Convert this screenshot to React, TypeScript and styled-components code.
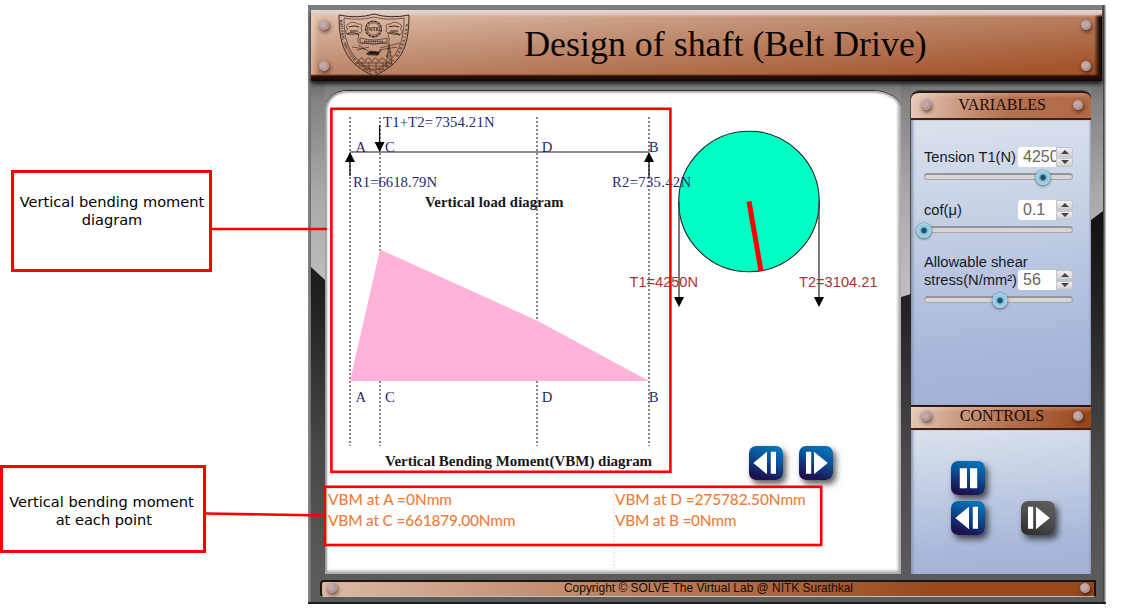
import React from "react";
import styled, { createGlobalStyle, css } from "styled-components";

const GlobalStyle = createGlobalStyle`
  *, *::before, *::after { box-sizing: border-box; }
  body { margin: 0; background: #fff; font-family: "Liberation Sans", Arial, sans-serif; }
`;

const SERIF = '"Liberation Serif", "Times New Roman", serif';

const Page = styled.div`
  position: relative;
  display: flex;
  width: 1121px;
  height: 613px;
  overflow: hidden;
  background: #fff;
`;

const Notes = styled.aside`
  display: flex;
  flex-direction: column;
  width: 308px;
  padding-top: 170px;
  gap: 193px;
`;

const Note = styled.div<{ $indent: number; $width: number; $height: number; $pad: string }>`
  width: ${(p) => p.$width}px;
  height: ${(p) => p.$height}px;
  margin-left: ${(p) => p.$indent}px;
  padding: ${(p) => p.$pad};
  border: 3px solid #f00;
  font: 14.6px/18px "DejaVu Sans", Verdana, sans-serif;
  text-align: center;
  white-space: nowrap;
  color: #000;
`;

const Frame = styled.main`
  display: flex;
  flex-direction: column;
  width: 798px;
  height: 599px;
  margin-top: 5px;
  padding: 5px 3px 0;
  background: linear-gradient(90deg, #8a8a8a 0, #6d6d6d 3px, transparent 3px, transparent 794px, #4b4445 795px, #4b4445 796px, #bcb6b6 797px),
    linear-gradient(#7d8182 0, #7d8182 75px, #5a5a5a 100%);
  border-bottom: 2px solid #1d1d1d;
`;

const Header = styled.header`
  display: flex;
  align-items: center;
  width: 791px;
  height: 71px;
  flex: none;
  padding: 0 11px 0 8px;
  background: linear-gradient(#e4d8d3 0, #dfc9bd 4px, transparent 7px, transparent 64px, #2a1005 66px, #150702 71px),
    linear-gradient(90deg, rgba(255, 235, 225, 0.4) 0, transparent 7px, transparent 783px, #2b1208 788px, #100602 791px),
    linear-gradient(175deg, #e2c3b0 0, #c18f74 38%, #a3552c 88%);
  box-shadow: 0 3px 4px rgba(0, 0, 0, 0.75);
  z-index: 1;
`;

const RivetColumn = styled.div`
  display: flex;
  flex-direction: column;
  gap: 31px;
`;

const Rivet = styled.i`
  display: block;
  flex: none;
  width: 10px;
  height: 10px;
  border-radius: 50%;
  background: radial-gradient(circle at 42% 40%, #c3a6a6 0 35%, #a98e90 60%, #dccaca 100%);
  box-shadow: 1px 2px 4px rgba(40, 15, 5, 0.75);
`;

const Crest = styled.svg`
  width: 72px;
  height: 64px;
  margin: -2px 0 0 9px;
`;

const Title = styled.h1`
  flex: 1;
  margin: -4px 37px 0 -3px;
  text-align: center;
  white-space: nowrap;
  font: 400 35.9px/44px ${SERIF};
  color: #080402;
`;

const Body = styled.div`
  display: flex;
  height: 493px;
  background: linear-gradient(#707070 0, #858585 15px, #5c5c5c 100%);
`;

const Rail = styled.div<{ $width: number; $left: number; $right: number }>`
  flex: none;
  width: ${(p) => p.$width}px;
  background: linear-gradient(#6c6c6c 0, #838383 20px, #a8a8a8 110px, #bdbdbd 200px);
  &::after {
    content: "";
    display: block;
    height: 100%;
    background: linear-gradient(#111 26%, #222 45%, #484848 75%, #5b5b5b 100%);
    clip-path: polygon(0 ${(p) => p.$left}px, 100% ${(p) => p.$right}px, 100% 100%, 0 100%);
  }
`;

const Stage = styled.section`
  display: flex;
  flex-direction: column;
  width: 576px;
  height: 483px;
  margin-top: 10px;
  border-radius: 22px 30px 0 0 / 20px 18px 0 0;
  background: #fff;
  box-shadow: 0 -1px 0 0 #303030, inset -3px -3px 3px #aaa, inset 2px 0 2px #999, inset 0 2px 2px #bbb;
`;

const StageWrap = styled.div`
  background: linear-gradient(#747474, #868686 15px, #999 60px);
  height: 483px;
`;

const Diagram = styled.svg`
  display: block;
  flex: none;
  width: 575px;
  height: 355px;
`;

const CaptionRow = styled.div`
  display: flex;
  height: 34px;
  padding-left: 60px;
`;

const Caption = styled.h2`
  width: 364px;
  margin: 0;
  white-space: nowrap;
  font: 700 14.95px/31px ${SERIF};
  color: #161616;
`;

const StageButtons = styled.div`
  display: flex;
  gap: 16px;
`;

const Results = styled.dl`
  display: grid;
  grid-template-columns: 285px 1fr;
  height: 80px;
  margin: 9px 0 0 3px;
  font: 500 15.4px/21px Lato, "Open Sans", sans-serif;
  color: #ee7e3b;
`;

const ResultColumn = styled.div<{ $ruled?: boolean }>`
  white-space: nowrap;
  ${(p) => p.$ruled && css`border-left: 2px dotted #f5e9eb;`}
`;

const Result = styled.div<{ $spacing: number }>`
  height: 21px;
  letter-spacing: ${(p) => p.$spacing}px;
`;

const Sidebar = styled.aside`
  width: 180px;
  height: 483px;
  margin-top: 10px;
  box-shadow: 0 0 0 1px #4a4a4a;
  border-radius: 8px 8px 0 0;
`;

const PanelHeader = styled.div<{ $round?: boolean }>`
  display: flex;
  align-items: center;
  justify-content: space-between;
  height: ${(p) => (p.$round ? 29 : 25)}px;
  padding: 0 8px ${(p) => (p.$round ? 1 : 3)}px 10px;
  font: 400 16px/20px ${SERIF};
  color: #1a0d08;
  border-radius: ${(p) => (p.$round ? "8px 8px 0 0" : "0")};
  border-top: 2px solid #2b1a14;
  border-bottom: 2px solid #41200f;
  background: linear-gradient(rgba(255, 240, 230, 0.25) 0, transparent 5px),
    linear-gradient(100deg, #e6cbbc 0, #cc9d85 25%, #b4704d 55%, ${(p) => (p.$round ? "#b26a47" : "#98461b")} 100%);
`;

const PanelBody = styled.div<{ $height: number; $top: number }>`
  height: ${(p) => p.$height}px;
  padding: ${(p) => p.$top}px 0 0 13px;
  background: linear-gradient(175deg, #dbe2ed 0, #c5d0e5 35%, #a9b7da 78%, #a3b0d6 100%);
  box-shadow: inset 3px 0 3px -1px #8c96b0, inset -2px 0 2px -1px #8c96b0;
`;

const Variable = styled.div<{ $height: number }>`
  display: flex;
  flex-direction: column;
  width: 149px;
  height: ${(p) => p.$height}px;
`;

const VariableRow = styled.div`
  display: flex;
  align-items: flex-end;
`;

const Label = styled.label`
  width: 94px;
  white-space: nowrap;
  font-size: 14.7px;
  line-height: 18px;
  padding-bottom: 1px;
  color: #151a22;
`;

const Value = styled.div`
  width: 38px;
  height: 20px;
  padding-left: 5px;
  overflow: hidden;
  border-radius: 3px 0 0 3px;
  background: #fff;
  font-size: 16px;
  line-height: 20px;
  color: #666;
`;

const Spinner = styled.div`
  display: flex;
  flex-direction: column;
  gap: 1px;
  width: 17px;
  height: 20px;
`;

const Step = styled.div<{ $down?: boolean }>`
  display: flex;
  align-items: center;
  justify-content: center;
  flex: 1;
  border: 1px solid #c4c4c4;
  border-radius: ${(p) => (p.$down ? "0 0 3px 0" : "0 3px 0 0")};
  background: linear-gradient(#f1f1f1, #cfcfcf);
  &::before {
    content: "";
    border: 4px solid transparent;
    border-top-width: ${(p) => (p.$down ? 4 : 0)}px;
    border-bottom-width: ${(p) => (p.$down ? 0 : 4)}px;
    border-${(p) => (p.$down ? "top" : "bottom")}-color: #444;
  }
`;

const Track = styled.div`
  position: relative;
  height: 7px;
  margin-top: 6px;
  border: 1px solid #a5a5a8;
  border-top: 2px solid #96969a;
  border-radius: 4px;
  background: #d6d6d8;
`;

const Knob = styled.span`
  position: absolute;
  top: -5px;
  width: 15px;
  height: 15px;
  transform: translateX(-50%);
  border-radius: 50%;
  background: radial-gradient(circle, #1f4e66 0 2px, #5a9bb8 3px, #8fc5de 4px, #a5d3e6 7px);
  box-shadow: 0 0 0 0.5px #6c9db4, 0 1px 3px rgba(0, 0, 0, 0.6);
`;

const Controls = styled.div`
  display: grid;
  grid-template-columns: 34px 34px;
  grid-auto-rows: 34px;
  column-gap: 36px;
  row-gap: 6px;
  padding-left: 27px;
`;

const Button = styled.button<{ $muted?: boolean }>`
  display: block;
  width: 34px;
  height: 34px;
  padding: 0;
  border: 0;
  border-radius: 7px;
  background: ${(p) =>
    p.$muted ? "linear-gradient(205deg, #606060, #4c4c4c 50%, #292929)" : "linear-gradient(200deg, #0573b9 10%, #0b4f94 42%, #1c1554 82%, #230d48)"};
  box-shadow: 3px 4px 6px rgba(0, 0, 0, 0.65);
  svg { display: block; }
`;

const FooterArea = styled.div`
  display: flex;
  flex: 1;
  padding: 6px 7px 0 9px;
  background: #5b5b5b;
`;

const Footer = styled.footer`
  display: flex;
  align-items: center;
  justify-content: space-between;
  width: 776px;
  height: 17px;
  padding: 0 4px 2px 5px;
  border: 2px solid #1c1512;
  border-bottom: 1px solid #c8c2bf;
  border-radius: 4px 0 0 4px;
  background: linear-gradient(90deg, #dcb9a6 0, #c79478 25%, #b06a45 55%, #99481c 80%);
  font-size: 11.95px;
  line-height: 14px;
  color: #160b06;
`;

const Overlay = styled.svg`
  position: absolute;
  inset: 0;
  z-index: 2;
  pointer-events: none;
`;

type IconKind = "prev" | "next" | "pause";

const ICON_PATHS: Record<IconKind, string> = {
  prev: "M4.3 17 18 5.7v22.6zM21.8 5.8H27v22h-5.2z",
  next: "M28.8 17 15 5.7v22.6zM7 5.8h5.2v22H7z",
  pause: "M8.8 7.3H16v20H8.800zM19 7.3h7.200v20H19z",
};

function MediaButton({ kind, muted }: { kind: IconKind; muted?: boolean }) {
  return (
    <Button $muted={muted} aria-label={kind}>
      <svg width="34" height="34" viewBox="0 0 34 34">
        <path d={ICON_PATHS[kind]} fill="#fff" />
      </svg>
    </Button>
  );
}

function VariableControl({ label, value, percent, height }: { label: React.ReactNode; value: string; percent: number; height: number }) {
  return (
    <Variable $height={height}>
      <VariableRow>
        <Label>{label}</Label>
        <Value>{value}</Value>
        <Spinner>
          <Step />
          <Step $down />
        </Spinner>
      </VariableRow>
      <Track>
        <Knob style={{ left: `${percent}%` }} />
      </Track>
    </Variable>
  );
}

function CollegeCrest() {
  return (
    <Crest viewBox="0 0 72 64" fill="none" stroke="#3b281f" strokeWidth="0.65">
      <path d="M1 2Q20 6 36 1Q52 6 71 2C71 35 63 51 36 63C9 51 1 35 1 2Z" strokeWidth="1" />
      <path d="M6 5Q22 8 36 4Q50 8 66 5C66 33 58 47 36 58C14 47 6 33 6 5Z" />
      <defs>
        <path id="crest-left" d="M2.8 7C4 33 12 50 35 60" />
        <path id="crest-right" d="M37 60C60 50 68 33 69.4 5" />
      </defs>
      <g fill="#3b281f" stroke="none" fontFamily="Liberation Sans, sans-serif" fontSize="3.7" fontWeight="700">
        <text dy="1"><textPath href="#crest-left" textLength="64">NATIONAL INSTITUTE OF TECH</textPath></text>
        <text dy="1"><textPath href="#crest-right" textLength="62">NOLOGY KARNATAKA</textPath></text>
      </g>
      <circle cx="35.5" cy="16" r="7.8" strokeWidth="1.4" strokeDasharray="3 .7" />
      <circle cx="35.5" cy="16" r="6.2" />
      <text x="35.5" y="18.2" textAnchor="middle" textLength="11" lengthAdjust="spacingAndGlyphs" fontFamily="Liberation Serif, serif" fontSize="6.500" fontWeight="700" fill="#241610" stroke="none">NITK</text>
      <path d="M9 12q5-5 11-1q6 0 3 4q3 5-3 5q-7 3-11 1q-3-3 1-5q-3-2-1-4zM63 12q-5-5-11-1q-6 0-3 4q-3 5 3 5q7 3 11 1q3-3-1-5q3-2 1-4z" />
      <path d="M11 14q5-2 10 0M9 21q6-3 12 1M12 18h8M51 14q5-2 10 0M50 21q6-3 12 1M52 18h8" strokeWidth="1.1" />
      <path d="M21 22q-3 8 2 9l5-1q8 2 15 0l6 1q4-3 1-9M22 25q14 4 27 0v4q-13 4-27 0z" />
      <path d="M26 28.5h19" strokeWidth="1.4" strokeDasharray="1.2 .6" />
      <path d="M14 34l13 2-7-4M19 37l12-3M26 36l7 3M42 35l20-5M41 37l18-3" />
      <path d="M28 41l5-3 8 1 2-2-3 5zM30 42h10" fill="#241610" />
      <path d="M51 30l-3 24M51 30l3 22M49.5 35h3M49 39h4M48.5 43h5M49 35l4 4-5 4 6 5" />
      <path d="M20 49q3-8 7 0q3-8 7 0q3-8 7 0q3-8 7 0M17 50h37M21 53h30M26 56h20M24 49v5M31 49v7M38 49v7M45 49v6" />
    </Crest>
  );
}

const POINTS = [
  { name: "A", line: 350, label: 355.5 },
  { name: "C", line: 380, label: 385 },
  { name: "D", line: 537, label: 541.8 },
  { name: "B", line: 649, label: 648.8 },
];

function ShaftDiagram() {
  return (
    <Diagram viewBox="325 91 575 355">
      <g stroke="#555" strokeWidth="1.4" strokeDasharray="2 2">
        {POINTS.map((p) => <path key={p.name} d={`M${p.line} 117V446`} />)}
      </g>
      <path d="M350 381 380 249.5 537 320.5 649 381Z" fill="#ffb3d9" />
      <path d="M350 152H649" stroke="#666" strokeWidth="1.4" />
      <g stroke="#111" strokeWidth="1.3">
        <path d="M350 160V176M379.6 125V143M649 160V177" />
      </g>
      <path d="M350 152l5 10h-10zM379.6 152l5-10h-10zM649 152l5 10h-10z" />
      <circle cx="749" cy="201.5" r="70.3" fill="#00ffc3" stroke="#222" strokeWidth="1.1" />
      <path d="M679 201V297M819 201V297" stroke="#444" strokeWidth="1.4" />
      <path d="M679 307l-5-10h10zM819 307l-5-10h10z" />
      <path d="M749 201.5 761 271" stroke="#f00" strokeWidth="5" />
      <g fontFamily="Liberation Serif, Times New Roman, serif" fontSize="14.7" fill="#28286f">
        {POINTS.map((p) => (
          <React.Fragment key={p.name}>
            <text x={p.label} y="152">{p.name}</text>
            <text x={p.label} y="401.5">{p.name}</text>
          </React.Fragment>
        ))}
        <text x="383" y="127" textLength="50">T1+T2=</text>
        <text x="435" y="127" textLength="59.5">7354.21N</text>
        <text x="353" y="187" textLength="84">R1=6618.79N</text>
        <text x="612" y="187" textLength="79">R2=735.42N</text>
        <text x="425" y="207" textLength="138.5" fontWeight="700" fill="#161616">Vertical load diagram</text>
      </g>
      <g fontFamily="Liberation Sans, Arial, sans-serif" fontSize="14.6" fill="#a93232">
        <text x="629.5" y="287" textLength="68.5">T1=4250N</text>
        <text x="799" y="287" textLength="78.5">T2=3104.21</text>
      </g>
    </Diagram>
  );
}

export default function App() {
  return (
    <>
      <GlobalStyle />
      <Page>
        <Notes>
          <Note $indent={11} $width={201} $height={102} $pad="20px 4px 0 5px">
            Vertical bending moment<br />diagram
          </Note>
          <Note $indent={0} $width={206} $height={88} $pad="25px 7px 0 4px">
            Vertical bending moment<br />&nbsp;at each point
          </Note>
        </Notes>
        <Frame>
          <Header>
            <RivetColumn><Rivet /><Rivet /></RivetColumn>
            <CollegeCrest />
            <Title>Design of shaft (Belt Drive)</Title>
            <RivetColumn><Rivet /><Rivet /></RivetColumn>
          </Header>
          <Body>
            <Rail $width={14} $left={186} $right={199} />
            <StageWrap>
              <Stage>
                <ShaftDiagram />
                <CaptionRow>
                  <Caption>Vertical Bending Moment(VBM) diagram</Caption>
                  <StageButtons>
                    <MediaButton kind="prev" />
                    <MediaButton kind="next" />
                  </StageButtons>
                </CaptionRow>
                <Results>
                  <ResultColumn>
                    <Result $spacing={0}>VBM at A =0Nmm</Result>
                    <Result $spacing={-0.17}>VBM at C =661879.00Nmm</Result>
                  </ResultColumn>
                  <ResultColumn $ruled>
                    <Result $spacing={-0.08}>VBM at D =275782.50Nmm</Result>
                    <Result $spacing={-0.25}>VBM at B =0Nmm</Result>
                  </ResultColumn>
                </Results>
              </Stage>
            </StageWrap>
            <Rail $width={10} $left={216} $right={213} />
            <Sidebar>
              <PanelHeader $round><Rivet />VARIABLES<Rivet /></PanelHeader>
              <PanelBody $height={285} $top={27}>
                <VariableControl label="Tension T1(N)" value="4250" percent={80} height={53} />
                <VariableControl label="cof(μ)" value="0.1" percent={-1} height={53} />
                <VariableControl label={<>Allowable shear<br />stress(N/mm²)</>} value="56" percent={51} height={60} />
              </PanelBody>
              <PanelHeader><Rivet />CONTROLS<Rivet /></PanelHeader>
              <PanelBody $height={144} $top={31}>
                <Controls>
                  <MediaButton kind="pause" />
                  <span />
                  <MediaButton kind="prev" />
                  <MediaButton kind="next" muted />
                </Controls>
              </PanelBody>
            </Sidebar>
            <Rail $width={12} $left={139} $right={130} />
          </Body>
          <FooterArea>
            <Footer><Rivet />Copyright © SOLVE The Virtual Lab @ NITK Surathkal<Rivet /></Footer>
          </FooterArea>
        </Frame>
        <Overlay width="1121" height="613" fill="none" stroke="#f00" strokeWidth="2.6">
          <rect x="331.4" y="108.8" width="339" height="363" />
          <rect x="324.8" y="486.8" width="496.4" height="58.2" />
          <path d="M211 229H327M206 513.5 324 515.5" />
        </Overlay>
      </Page>
    </>
  );
}
